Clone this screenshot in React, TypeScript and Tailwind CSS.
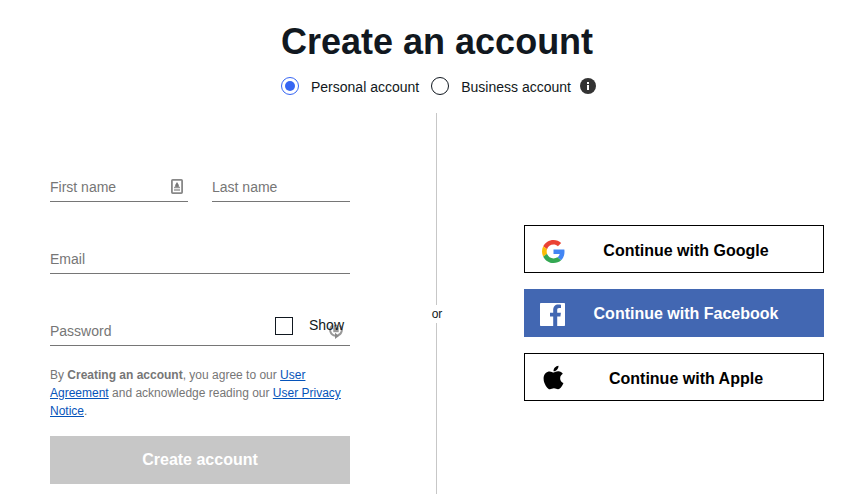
import type { ReactNode } from "react";
import { FaApple } from "react-icons/fa";

function GoogleIcon() {
  return (
    <svg className="h-[23px] w-[23px]" viewBox="0 0 48 48">
      <path fill="#EA4335" d="M24 9.5c3.54 0 6.71 1.22 9.21 3.6l6.85-6.85C35.9 2.38 30.47 0 24 0 14.62 0 6.51 5.38 2.56 13.22l7.98 6.19C12.43 13.72 17.74 9.5 24 9.5z" />
      <path fill="#4285F4" d="M46.98 24.55c0-1.57-.15-3.09-.38-4.55H24v9.02h12.94c-.58 2.96-2.26 5.48-4.78 7.18l7.73 6c4.51-4.18 7.09-10.36 7.09-17.65z" />
      <path fill="#FBBC05" d="M10.53 28.59c-.48-1.45-.76-2.99-.76-4.59s.27-3.14.76-4.59l-7.98-6.19C.92 16.46 0 20.12 0 24c0 3.88.92 7.54 2.56 10.78l7.97-6.19z" />
      <path fill="#34A853" d="M24 48c6.48 0 11.93-2.13 15.89-5.81l-7.73-6c-2.15 1.45-4.92 2.3-8.16 2.3-6.26 0-11.57-4.22-13.47-9.91l-7.98 6.19C6.51 42.62 14.62 48 24 48z" />
    </svg>
  );
}

function FacebookIcon() {
  return (
    <svg className="h-[23px] w-[25px]" viewBox="0 0 25 23">
      <rect width="25" height="23" rx="0.7" fill="#fff" />
      <path fill="#4267b2" d="M13.200 23v-9.500H10V9.800h3.200V7.200c0-3.700 2-5.700 5-5.700 1.200 0 2.300.1 2.800.2v3.400h-1.900c-1.500 0-1.900.8-1.900 2.100v2.600h3.700l-.5 3.700h-3.200V23z" />
    </svg>
  );
}

function ContactIcon() {
  return (
    <svg className="h-4 w-3" viewBox="0 0 12 16">
      <rect x="0.9" y="0.9" width="10.200" height="13.200" rx="0.8" fill="#fff" stroke="#888" strokeWidth="1.800" />
      <path d="M6 3 7.800 6v2H4.200V6z" fill="#777" />
      <path d="M3 8.500h6M3 11h6" stroke="#999" strokeWidth="1.300" />
    </svg>
  );
}

function KeyRefreshIcon() {
  return (
    <svg className="h-4 w-[14px]" viewBox="0 0 14 16" fill="none">
      <path d="M3.200 2.500A5.800 5.800 0 0 0 6.500 12.700M10.800 2.500A5.800 5.800 0 0 1 8.500 12.500" stroke="#999" strokeWidth="2" />
      <path d="m6 9.800 4 3.200-4 3z" fill="#888" />
      <path d="M5.300 6V3.800a1.700 1.700 0 0 1 3.400 0V6" stroke="#999" strokeWidth="1.300" />
      <rect x="4.300" y="5.200" width="5.400" height="4" fill="#999" />
    </svg>
  );
}

function InfoIcon() {
  return (
    <svg className="ml-[9px] h-4 w-4" viewBox="0 0 16 16">
      <circle cx="8" cy="8" r="8" fill="#333" />
      <path d="M7 4h2v2H7zM7 7h2v5H7z" fill="#fff" />
    </svg>
  );
}

function Radio({ checked = false }: { checked?: boolean }) {
  return (
    <span className={`flex h-[18px] w-[18px] items-center justify-center rounded-full border ${checked ? "border-[#3665f3]" : "border-[#111820]"}`}>
      {checked && <span className="h-[10px] w-[10px] rounded-full bg-[#3665f3]" />}
    </span>
  );
}

function Field({ label, children }: { label: string; children?: ReactNode }) {
  return (
    <label className="flex h-[30px] w-full min-w-0 justify-between border-b border-[#767676] text-sm leading-[30px] text-[#767676]">
      <span>{label}</span>
      {children}
    </label>
  );
}

function SocialButton({ icon, children, className, iconClass = "", textClass = "" }: { icon: ReactNode; children: ReactNode; className: string; iconClass?: string; textClass?: string }) {
  return (
    <button className={`flex h-12 w-[300px] items-center border text-base font-bold ${className}`}>
      <span className={`ml-[15px] flex w-[26px] ${iconClass}`}>{icon}</span>
      <span className={`flex-1 pr-[17px] text-center ${textClass}`}>{children}</span>
    </button>
  );
}

export default function App() {
  return (
    <main className="flex h-[494px] w-[868px] flex-col overflow-hidden bg-white font-['Liberation_Sans',Arial,sans-serif] text-[#111820]">
      <header className="ml-[281px] h-28 pt-5">
        <h1 className="text-[36px] leading-[44px] font-bold whitespace-nowrap">Create an account</h1>
        <div className="mt-[13px] flex h-[18px] items-center text-sm whitespace-nowrap">
          <Radio checked />
          <span className="mt-0.5 mr-3 ml-3">Personal account</span>
          <Radio />
          <span className="mt-0.5 ml-3">Business account</span>
          <InfoIcon />
        </div>
      </header>
      <div className="flex flex-1">
        <form className="ml-[50px] flex w-[300px] flex-col pt-[60px]">
          <div className="grid grid-cols-2 gap-6">
            <Field label="First name">
              <span className="mt-[7px] mr-[5px]"><ContactIcon /></span>
            </Field>
            <Field label="Last name" />
          </div>
          <div className="mt-[42px]"><Field label="Email" /></div>
          <div className="mt-[42px]">
            <Field label="Password">
              <span className="flex text-[#111820]">
                <span className="mt-px h-[18px] w-[18px] border border-[#111820]" />
                <span className="relative mr-[6px] ml-4 h-[18px] leading-[18px]">
                  <span className="absolute top-[7px] right-px"><KeyRefreshIcon /></span>
                  <span className="relative">Show</span>
                </span>
              </span>
            </Field>
          </div>
          <p className="mt-5 text-xs leading-[18px] text-[#767676]">
            By <b>Creating an account</b>, you agree to our <a className="text-[#0654ba] underline">User Agreement</a> and acknowledge reading our <a className="text-[#0654ba] underline">User Privacy Notice</a>.
          </p>
          <button type="button" className="mt-4 h-12 shrink-0 bg-[#c7c7c7] text-base font-bold text-white">Create account</button>
        </form>
        <div className="ml-[81px] flex w-[11px] flex-col items-center text-xs">
          <span className="mt-px h-48 w-px shrink-0 bg-[#c7c7c7]" />
          <span className="pl-px leading-[18px]">or</span>
          <span className="w-px flex-1 bg-[#c7c7c7]" />
        </div>
        <div className="ml-[82px] flex flex-col gap-4 pt-[113px]">
          <SocialButton icon={<GoogleIcon />} className="border-black text-black" iconClass="justify-center pt-[5px]" textClass="pt-[3px]">Continue with Google</SocialButton>
          <SocialButton icon={<FacebookIcon />} className="border-[#4267b2] bg-[#4267b2] text-white" iconClass="pt-[3px]" textClass="pt-px">Continue with Facebook</SocialButton>
          <SocialButton icon={<FaApple size={27} className="shrink-0" />} className="border-black text-black" iconClass="justify-center pt-px" textClass="pt-[3px]">Continue with Apple</SocialButton>
        </div>
      </div>
    </main>
  );
}
